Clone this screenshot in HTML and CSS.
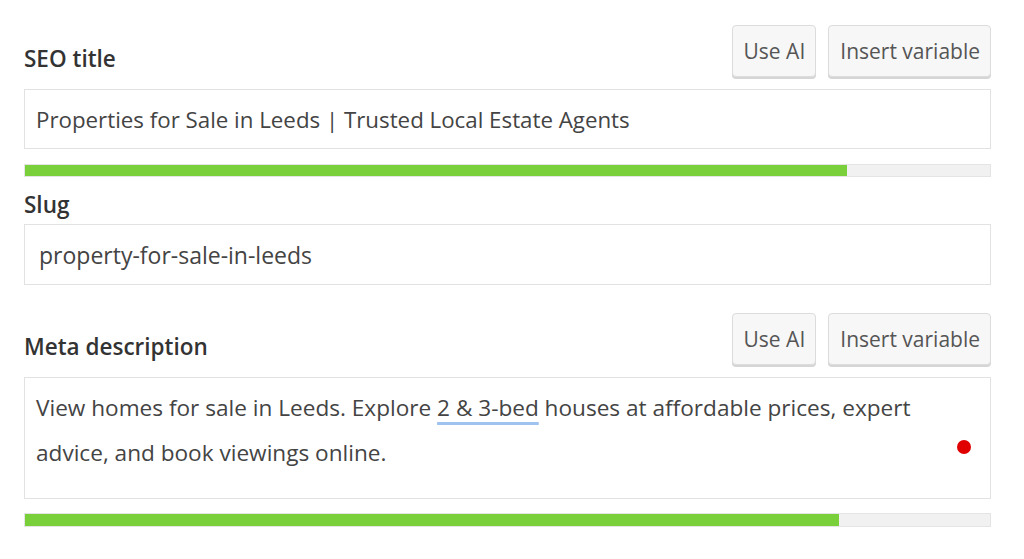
FILE: index.html
```html
<!DOCTYPE html>
<html lang="en">
<head>
    <meta charset="UTF-8">
    <title>SEO settings</title>
    <link rel="stylesheet" href="styles.css">
</head>
<body>
    <div class="seo-panel">

        <!-- SEO title -->
        <div class="field-head field-head-first">
            <label class="field-label">SEO title</label>
            <div class="field-actions">
                <button class="btn">Use AI</button>
                <button class="btn">Insert variable</button>
            </div>
        </div>
        <div class="field-box">Properties for Sale in Leeds | Trusted Local Estate Agents</div>
        <div class="progress"><div class="progress-fill" style="width: 85.2%;"></div></div>

        <!-- Slug -->
        <label class="field-label slug-label">Slug</label>
        <div class="field-box slug-box">property-for-sale-in-leeds</div>

        <!-- Meta description -->
        <div class="field-head">
            <label class="field-label">Meta description</label>
            <div class="field-actions">
                <button class="btn">Use AI</button>
                <button class="btn">Insert variable</button>
            </div>
        </div>
        <div class="field-box field-area">
            <p class="area-text">View homes for sale in Leeds. Explore <span class="spell">2 &amp; 3-bed</span> houses at affordable prices, expert advice, and book viewings online.</p>
            <span class="status-dot"></span>
        </div>
        <div class="progress progress-last"><div class="progress-fill" style="width: 84.4%;"></div></div>

    </div>
</body>
</html>
```

FILE: styles.css
```css
/* Estilos generales */
body {
    margin: 0;
    padding: 0;
    background: #fff;
    font-family: 'Open Sans', 'Noto Sans', sans-serif;
    color: #444;
}

.seo-panel {
    width: 967px;
    margin-left: 24px;
}

/* Cabecera de cada campo */
.field-head {
    display: flex;
    justify-content: space-between;
    align-items: flex-end;
    margin-top: 28px;
    margin-bottom: 12px;
}

.field-head-first {
    margin-top: 25px;
}

.field-label {
    display: block;
    font-size: 22.5px;
    font-weight: 600;
    color: #333;
    line-height: 28px;
    padding-bottom: 4px;
}

.field-actions {
    display: flex;
    gap: 12px;
}

.btn {
    height: 52px;
    padding: 0 10px 0 11px;
    font-family: inherit;
    font-size: 21px;
    color: #555;
    background: #f7f7f7;
    border: 1px solid #dcdcdc;
    border-radius: 4px;
    box-shadow: 0 2px 0 #d6d6d6;
}

/* Cajas de texto */
.field-box {
    box-sizing: border-box;
    height: 60px;
    border: 1px solid #e2e2e2;
    padding: 0 11px;
    font-size: 22.3px;
    line-height: 60px;
    color: #444;
    white-space: nowrap;
}

.slug-label {
    margin-top: 14px;
    margin-bottom: 5px;
    padding-bottom: 0;
}

.slug-box {
    height: 61px;
    padding-left: 14px;
    font-size: 23px;
}

.field-area {
    position: relative;
    height: 122px;
    white-space: normal;
    font-size: 22.6px;
    line-height: 45px;
    padding-top: 7px;
}

.area-text {
    margin: 0;
    width: 890px;
}

.spell {
    text-decoration: underline;
    text-decoration-color: #9fc3f0;
    text-decoration-thickness: 3px;
    text-underline-offset: 6px;
}

.status-dot {
    position: absolute;
    right: 19px;
    top: 62px;
    width: 14px;
    height: 14px;
    border-radius: 50%;
    background: #e00000;
}

/* Barra de progreso */
.progress {
    box-sizing: border-box;
    height: 13px;
    margin-top: 15px;
    background: #f1f1f1;
    border: 1px solid #e4e4e4;
}

.progress-last {
    margin-top: 14px;
    height: 14px;
}

.progress-fill {
    height: 100%;
    background: #7ad03a;
}
```
